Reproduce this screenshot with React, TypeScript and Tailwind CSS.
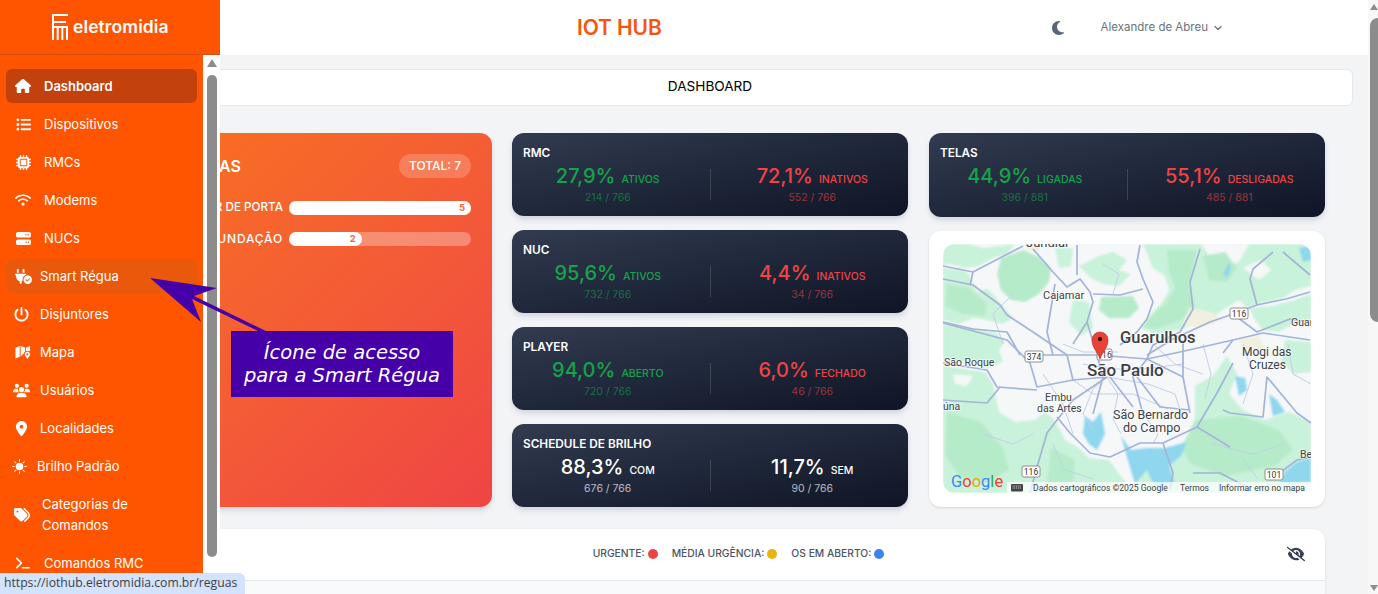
import { FaHouse, FaListUl, FaMicrochip, FaWifi, FaServer, FaPowerOff, FaUsers, FaLocationDot, FaTags, FaTerminal, FaMoon, FaEyeSlash, FaPlugCircleCheck } from 'react-icons/fa6';
import { BsSunFill } from 'react-icons/bs';
import { ChevronDown } from 'lucide-react';

function MapIcon({ size }: { size: number; color?: string }) {
  return (
    <svg width={size} height={size} viewBox="0 0 17 16">
      <path d="M0.5 3.5 L5 1.5 V13 L0.5 15Z M6 1.5 L10.5 3.2 V8 L6 13Z M11.5 3.2 L16 1.5 V7 L11.5 7Z" fill="#fff" />
      <path d="M13 16 C11.5 13.5 10 12.5 10 10.5 A3.2 3.2 0 0 1 16.4 10.5 C16.4 12.5 14.6 13.5 13.2 16Z" fill="#fff" stroke="#ff5500" strokeWidth="1" />
      <circle cx="13.2" cy="10.5" r="1.1" fill="#ff5500" />
    </svg>
  );
}

const nav = [
  { Icon: FaHouse, label: 'Dashboard', size: 16, box: 'w-[34px]', text: 'ml-[4px] font-semibold', row: 'h-[34px] bg-[#c2410c]' },
  { Icon: FaListUl, label: 'Dispositivos', size: 15, box: 'w-[34px]', text: 'ml-[4px]', row: 'h-[34px]' },
  { Icon: FaMicrochip, label: 'RMCs', size: 15, box: 'w-[34px]', text: 'ml-[4px]', row: 'h-[34px]' },
  { Icon: FaWifi, label: 'Modems', size: 16, box: 'w-[34px]', text: 'ml-[4px]', row: 'h-[34px]' },
  { Icon: FaServer, label: 'NUCs', size: 15, box: 'w-[34px]', text: 'ml-[4px]', row: 'h-[34px]' },
  { Icon: FaPlugCircleCheck, label: 'Smart Régua', size: 17, box: 'w-[34px]', text: '', row: 'h-[34px] bg-[#ea580c]' },
  { Icon: FaPowerOff, label: 'Disjuntores', size: 15, box: 'w-[30px]', text: 'ml-[4px]', row: 'h-[34px]' },
  { Icon: MapIcon, label: 'Mapa', size: 16, box: 'w-[34px]', text: '', row: 'h-[34px]' },
  { Icon: FaUsers, label: 'Usuários', size: 17, box: 'w-[30px]', text: 'ml-[4px]', row: 'h-[34px]' },
  { Icon: FaLocationDot, label: 'Localidades', size: 15, box: 'w-[30px]', text: 'ml-[4px]', row: 'h-[34px]' },
  { Icon: BsSunFill, label: 'Brilho Padrão', size: 15, box: 'w-[26px]', text: 'ml-[5px]', row: 'h-[34px]' },
  { Icon: FaTags, label: 'Categorias de Comandos', size: 16, box: 'w-[32px]', text: 'ml-[4px] w-[110px] leading-[21px]', row: 'h-[55px]' },
  { Icon: FaTerminal, label: 'Comandos RMC', size: 14, box: 'w-[34px]', text: 'ml-[4px]', row: 'h-[34px]' },
];

const cards = [
  { title: 'RMC', a: ['27,9%', 'ATIVOS', '214 / 766'], b: ['72,1%', 'INATIVOS', '552 / 766'] },
  { title: 'NUC', a: ['95,6%', 'ATIVOS', '732 / 766'], b: ['4,4%', 'INATIVOS', '34 / 766'] },
  { title: 'PLAYER', a: ['94,0%', 'ABERTO', '720 / 766'], b: ['6,0%', 'FECHADO', '46 / 766'] },
];

function Half({ v, tone }: { v: string[]; tone: 'green' | 'red' | 'white' }) {
  const main = tone === 'green' ? 'text-[#16a34a]' : tone === 'red' ? 'text-[#ef4444]' : 'text-white';
  const sub = tone === 'green' ? 'text-[#16a34a]/60' : tone === 'red' ? 'text-[#ef4444]/60' : 'text-white/70';
  return (
    <div className="flex-1 flex flex-col items-center">
      <div className={`flex items-baseline h-[24px] ${main}`}>
        <span className="text-[20px] leading-[24px] font-medium">{v[0]}</span>
        <span className="ml-[6px] text-[10.5px] font-medium">{v[1]}</span>
      </div>
      <div className={`mt-[3px] text-[10.5px] leading-[14px] ${sub}`}>{v[2]}</div>
    </div>
  );
}

function StatCard({ title, a, b, aTone = 'green', bTone = 'red', grow = true }: { title: string; a: string[]; b: string[]; aTone?: 'green' | 'red' | 'white'; bTone?: 'green' | 'red' | 'white'; grow?: boolean }) {
  return (
    <div className={`${grow ? 'flex-1' : 'h-[84px]'} rounded-xl bg-gradient-to-br from-[#323b50] to-[#0f1526] shadow-md shadow-gray-300 pt-[12px]`}>
      <div className="ml-[11px] text-[11.8px] leading-[16px] font-semibold text-white">{title}</div>
      <div className="flex items-center mx-[-6px] mt-[3px]">
        <Half v={a} tone={aTone} />
        <div className="w-px h-[31px] bg-white/15" />
        <Half v={b} tone={bTone} />
      </div>
    </div>
  );
}

const greenLight = [
  '0,0 26,0 40,4 72,0 64,10 50,14 36,22 22,24 6,20 0,22',
  '0,24 20,26 34,36 50,50 58,60 70,74 60,80 44,76 30,74 16,80 0,76',
  '0,80 24,84 52,88 62,98 56,106 60,118 44,124 28,116 10,120 0,114',
  '200,0 258,0 268,14 280,22 296,18 306,0 368,0 368,42 352,46 340,54 322,58 304,64 296,56 286,62 268,74 254,78 236,86 212,90 198,84 206,72 218,60 226,46 222,32 210,24',
  '306,64 330,62 352,56 368,50 368,78 350,80 336,88 320,86 312,76',
  '342,96 368,98 368,128 350,130 338,116',
  '0,122 42,128 50,140 56,168 72,178 92,176 102,168 112,176 122,196 136,204 146,214 166,216 176,230 192,249 0,249',
  '252,142 270,132 284,112 294,130 286,150 300,166 322,176 346,168 368,178 368,249 236,249 228,232 224,208 244,196 252,176',
  '200,222 226,212 236,249 190,249',
  '130,56 146,58 150,84 138,92 126,78',
  '112,4 130,4 128,22 116,24',
  '136,22 156,12 170,8 184,16 176,26 188,30 176,42 160,40 148,34',
  '270,148 280,156 272,170 262,160',
];
const greenDark = [
  '58,14 80,6 98,14 108,24 106,38 96,50 82,58 68,56 58,46 54,30',
  '224,6 254,6 250,24 246,40 252,62 238,76 216,84 200,84 208,72 222,60 232,44 226,28',
  '158,53 190,52 196,64 186,74 166,74 156,66',
  '260,12 282,8 294,24 284,38 266,36',
  '4,40 26,44 44,60 42,72 20,70 2,62',
  '4,168 38,178 60,204 66,226 44,238 16,232 2,210',
  '252,176 298,172 336,186 350,206 332,222 282,232 248,220 238,204',
  '108,204 132,216 130,238 104,240',
];
const pockets = [
  '26,32 42,30 46,44 34,48',
  '56,148 80,142 92,154 88,172 70,174 58,164',
  '10,130 30,132 24,142 12,140',
  '300,24 318,16 328,26 316,36',
  '76,60 88,62 90,76 78,72',
];
const beige = ['246,64 268,68 280,76 256,84 240,80', '296,94 316,92 322,108 302,112', '82,0 100,0 94,8 84,6'];
const water = [
  '142,172 150,178 158,168 162,190 154,206 146,200 140,190',
  '178,192 188,206 204,204 222,204 244,198 238,212 226,222 232,240 212,244 204,226 192,240 186,220',
  '292,132 302,134 304,146 296,152',
  '326,150 334,156 342,168 330,172',
  '342,228 354,218 368,214 368,238 336,240',
  '356,4 368,2 368,16 360,18',
  '280,30 286,18 288,24 284,34',
];
const roads = [
  '0,22 30,28 55,15 80,2', '0,35 30,41 57,61 64,71 90,88 124,111', '30,28 27,41',
  '90,5 110,28 124,43 137,35 147,48 150,58 144,78 150,98', '134,1 134,31', '197,1 194,18 200,35 210,58 204,75 194,88 177,101',
  '150,50 177,51 200,45', '257,5 247,38 250,65 237,88 210,101 204,115', '367,48 343,55 314,61 290,70 267,78 230,95 204,111',
  '330,8 310,25 307,35 314,61', '367,31 340,8', '290,70 314,88 347,75 367,78', '0,78 30,85 64,88 77,111',
  '97,111 154,111 204,115 237,108', '0,79 64,96 87,119 94,143 130,136 164,133', '0,119 44,126 54,143 94,146', '0,156 44,159 57,143',
  '164,133 130,156 114,176 104,189 94,223 87,249', '114,173 127,189 147,209 167,213 197,199 220,199 254,183 274,149 290,119',
  '167,133 190,163', '194,133 217,163 247,166', '240,96 240,133 247,169', '280,109 290,96 320,89 367,96',
  '280,166 287,169 320,173 324,133 354,169 368,179', '220,199 230,229 227,246', '254,183 287,203', '250,229 277,229 304,243',
  '327,236 354,216 368,213', '154,111 160,133 150,170', '204,115 190,133 200,170', '124,111 130,136', '237,108 290,96',
  '204,115 240,133', '112,40 104,88 110,111', '144,78 130,100',
];
const thin = [
  '164,133 150,145 140,170 150,185', '164,133 175,150 170,175 178,190', '164,133 205,140 232,150 240,175', '130,136 150,150 190,150 225,165',
  '140,120 170,125 200,125 240,120', '120,100 140,108 175,108', '210,100 232,120 260,130', '260,100 268,130 262,155',
  '100,130 120,160 130,190', '200,170 215,190 210,200', '60,100 50,70 70,50', '300,100 310,130 300,160', '160,20 176,30 170,50',
  '345,100 350,130 368,140', '40,190 70,200 90,190', '270,200 310,210 340,200', '300,215 315,235', '110,200 120,225 150,235',
];
const shields = [
  { x: 287, y: 64, w: 18, t: '116' }, { x: 82, y: 107, w: 18, t: '374' }, { x: 154, y: 105, w: 15, t: '116' },
  { x: 79, y: 222, w: 18, t: '116' }, { x: 322, y: 225, w: 18, t: '101' },
];
const labels: [string, number, number, number, number][] = [
  ['Jundiaí', 83, 3, 13, 400], ['Cajamar', 100, 55, 11, 400], ['Guarulhos', 177, 99, 16.5, 500], ['Guar', 348, 82, 10.5, 400],
  ['Mogi das', 299, 112, 12, 400], ['Cruzes', 306, 125, 12, 400], ['São Roque', 1, 122, 10.5, 400], ['São Paulo', 144, 132, 17, 500],
  ['Embu', 102, 157, 10.5, 400], ['das Artes', 94, 168, 10.5, 400], ['úna', 0, 166, 10.5, 400], ['São Bernardo', 170, 175, 12.5, 400],
  ['do Campo', 180, 188, 12.5, 400], ['Be', 357, 214, 10.5, 400],
];

function MapArt() {
  return (
    <svg viewBox="0 0 368 249" className="w-full h-full block">
      <defs>
        <filter id="soft"><feGaussianBlur stdDeviation="0.9" /></filter>
        <filter id="softer"><feGaussianBlur stdDeviation="0.45" /></filter>
      </defs>
      <rect width="368" height="249" fill="#f6f7f9" />
      <g filter="url(#soft)">
        {greenLight.map((p, i) => <polygon key={i} points={p} fill="#c9f2da" />)}
        {greenDark.map((p, i) => <polygon key={i} points={p} fill="#b6ebca" />)}
        {pockets.map((p, i) => <polygon key={i} points={p} fill="#f4f8f6" />)}
        {beige.map((p, i) => <polygon key={i} points={p} fill="#f1efdf" />)}
        {water.map((p, i) => <polygon key={i} points={p} fill="#8fd7ee" />)}
      </g>
      <g filter="url(#softer)" fill="none" strokeLinejoin="round">
        <g stroke="#c4cfe6" strokeWidth="1">
          {thin.map((p, i) => <polyline key={i} points={p} />)}
        </g>
        <g stroke="#a3b4d8" strokeWidth="1.7">
          {roads.map((p, i) => <polyline key={i} points={p} />)}
        </g>
      </g>
      {shields.map((s) => (
        <g key={s.x}>
          <rect x={s.x} y={s.y} width={s.w} height={11} rx={2} fill="#fff" stroke="#777" strokeWidth="0.8" />
          <text x={s.x + s.w / 2} y={s.y + 8.5} textAnchor="middle" fontSize="8.5" fill="#333" className="font-['Roboto']">{s.t}</text>
        </g>
      ))}
      {labels.map(([t, x, y, s, w]) => (
        <text key={t} x={x} y={y} fontSize={s} fontWeight={w} fill="#3c4043" stroke="#fff" strokeWidth="1.4" strokeOpacity="0.8" className="font-['Roboto'] [paint-order:stroke]">{t}</text>
      ))}
      <path d="M157 115 C155 108 149 104 149 96 A8 8 0 0 1 165 96 C165 104 159 108 157 115Z" fill="#ea4335" stroke="#b3261e" strokeWidth="0.6" />
      <circle cx="157" cy="95" r="2.2" fill="#3b0b08" />
      <text x="8" y="243" fontSize="16.5" className="font-['Roboto']" fontWeight="400">
        <tspan fill="#4285f4">G</tspan><tspan fill="#ea4335">o</tspan><tspan fill="#e8a800">o</tspan><tspan fill="#4285f4">g</tspan><tspan fill="#34a853">l</tspan><tspan fill="#ea4335">e</tspan>
      </text>
      <rect x="64" y="238" width="304" height="11" fill="#fff" fillOpacity="0.72" />
      <rect x="68" y="240" width="12" height="7.5" rx="1" fill="#444" />
      <path d="M69.5 242h9M69.5 244h9" stroke="#fff" strokeWidth="0.8" strokeDasharray="1 0.8" />
      <g fontSize="8.6" fill="#3c4043" className="font-['Roboto']">
        <text x="90" y="247">Dados cartográficos ©2025 Google</text>
        <text x="237" y="247">Termos</text>
        <text x="276" y="247">Informar erro no mapa</text>
      </g>
    </svg>
  );
}

export default function App() {
  return (
    <div className="relative w-[1378px] h-[594px] overflow-hidden flex bg-[#f3f4f6] font-['Inter',sans-serif]">
      <aside className="w-[220px] shrink-0 flex flex-col h-full">
        <div className="h-[55px] bg-[#ff5500] border-b border-[#d94f0f] flex items-center pl-[52px] shrink-0">
          <svg width="16" height="26" viewBox="0 0 16 26" fill="none" stroke="#fff" strokeWidth="2" className="mt-[-1px]">
            <path d="M1 26V1H16M1 8H14M1 13H15V26M5.7 13V26M10.3 13V26" />
          </svg>
          <span className="ml-[5px] text-[17.5px] font-semibold tracking-[0.1px] text-white">eletromidia</span>
        </div>
        <div className="flex-1 flex min-h-0">
          <nav className="w-[203px] bg-[#ff5500] pt-[14px] flex flex-col gap-[4px] overflow-hidden">
            {nav.map(({ Icon, label, size, box, text, row }) => (
              <div key={label} className={`mx-[6px] shrink-0 rounded-md flex items-center text-white text-[13px] ${row}`}>
                <div className={`${box} flex justify-center shrink-0`}><Icon size={size} color="#fff" /></div>
                <span className={`pt-px ${text}`}>{label}</span>
              </div>
            ))}
          </nav>
          <div className="w-[17px] bg-white pl-[4px] pt-[4px] flex flex-col">
            <svg width="10" height="8" viewBox="0 0 10 8"><path d="M5 0 L10 8 H0Z" fill="#8c8c8c" /></svg>
            <div className="mt-[8px] w-[10px] h-[482px] rounded-full bg-[#8c8c8c]" />
          </div>
        </div>
      </aside>

      <main className="flex-1 min-w-0 overflow-hidden flex flex-col">
        <header className="h-[55px] shrink-0 bg-white flex items-center pl-[357px] pr-[144px]">
          <span className="text-[21px] font-semibold text-[#f4560f] tracking-[-0.1px]">IOT HUB</span>
          <FaMoon size={16} color="#5b6478" className="ml-auto" />
          <span className="ml-[35px] text-[11.5px] text-[#6b7280]">Alexandre de Abreu</span>
          <ChevronDown size={12} strokeWidth={2.5} color="#6b7280" className="ml-[4px]" />
        </header>

        <div className="mt-[14px] ml-[-153px] mr-[15px] h-[37px] shrink-0 bg-white border border-[#e5e7eb] rounded-md flex items-center justify-center pb-[2px] text-[13.6px] font-normal text-black">DASHBOARD</div>

        <div className="mt-[27px] ml-[-124px] h-[374px] shrink-0 grid grid-cols-[396px_396px_397px] gap-x-[20px]">
          <div className="rounded-xl bg-gradient-to-br from-[#f97316] to-[#ef4444] shadow-md shadow-gray-300 pr-[21px] pt-[21px] text-white">
            <div className="flex items-center justify-between h-[24px]">
              <span className="w-[145px] text-right text-[16px] font-semibold">ALERTAS</span>
              <span className="h-[24px] px-[10px] rounded-full bg-white/20 flex items-center text-[12px] font-medium">TOTAL: 7</span>
            </div>
            <div className="mt-[23px] flex items-center h-[14px]">
              <span className="w-[187px] whitespace-nowrap text-right text-[11.7px] font-medium">SENSOR DE PORTA</span>
              <div className="ml-[6px] flex-1 h-[14px] rounded-full bg-white/30">
                <div className="h-full w-full rounded-full bg-white flex items-center justify-end pr-[6px] text-[9.5px] font-bold text-[#f4693a]">5</div>
              </div>
            </div>
            <div className="mt-[17px] flex items-center h-[14px]">
              <span className="w-[187px] whitespace-nowrap text-right text-[12px] tracking-[0.8px] font-medium">INUNDAÇÃO</span>
              <div className="ml-[6px] flex-1 h-[14px] rounded-full bg-white/30">
                <div className="h-full w-[40%] rounded-full bg-white flex items-center justify-end pr-[6px] text-[9.5px] font-bold text-[#f4693a]">2</div>
              </div>
            </div>
          </div>

          <div className="flex flex-col gap-[13.4px]">
            {cards.map((c) => <StatCard key={c.title} {...c} />)}
            <StatCard title="SCHEDULE DE BRILHO" a={['88,3%', 'COM', '676 / 766']} b={['11,7%', 'SEM', '90 / 766']} aTone="white" bTone="white" />
          </div>

          <div className="pl-[1px] flex flex-col gap-[14px]">
            <StatCard grow={false} title="TELAS" a={['44,9%', 'LIGADAS', '396 / 881']} b={['55,1%', 'DESLIGADAS', '485 / 881']} />
            <div className="flex-1 min-h-0 rounded-xl bg-white shadow-sm px-[14px] pt-[13px] pb-[14px]">
              <div className="h-full rounded-xl overflow-hidden"><MapArt /></div>
            </div>
          </div>
        </div>

        <section className="mt-[22px] ml-[-124px] mr-[43px] flex-1 min-h-0 shrink-0 rounded-t-xl bg-white shadow-sm">
          <div className="h-[52px] border-b border-[#e5e7eb] flex items-center pb-[2px] pl-[94px] pr-[20px]">
            <div className="flex-1 flex justify-center items-center text-[10.3px] font-medium text-[#4b5563]">
              <span>URGENTE:</span><span className="ml-[3px] w-[10px] h-[10px] rounded-full bg-[#ef4444]" />
              <span className="ml-[14px]">MÉDIA URGÊNCIA:</span><span className="ml-[3px] w-[10px] h-[10px] rounded-full bg-[#eab308]" />
              <span className="ml-[14px]">OS EM ABERTO:</span><span className="ml-[3px] w-[10px] h-[10px] rounded-full bg-[#3b82f6]" />
            </div>
            <FaEyeSlash size={18} color="#374151" />
          </div>
          <div className="h-full bg-[#f9fafb]" />
        </section>
      </main>

      <div className="w-[10px] shrink-0 bg-[#f7f7f7] flex flex-col items-end relative h-full">
        <svg width="8" height="6" viewBox="0 0 8 6" className="mt-[4px]"><path d="M4 0 L8 6 H0Z" fill="#8c8c8c" /></svg>
        <div className="mt-[8px] w-[8px] h-[304px] rounded-l-full bg-[#8c8c8c]" />
        <svg width="8" height="6" viewBox="0 0 8 6" className="mt-auto mb-[3px]"><path d="M4 6 L8 0 H0Z" fill="#8c8c8c" /></svg>
      </div>

      {/* Annotation overlay */}
      <svg className="absolute left-0 top-0 pointer-events-none" width="300" height="340" viewBox="0 0 300 340">
        <path d="M150 278 L217 288 L194 296 L268 332 L262 333 L192 299 L201 322 Z" fill="#4500a8" />
      </svg>
      <div className="absolute left-[231px] top-[331px] w-[222px] h-[66px] bg-[#4500a8] flex flex-col items-center justify-center text-white italic font-['DejaVu_Sans',sans-serif] text-[19.5px] leading-[23.5px]">
        <span>Ícone de acesso</span>
        <span>para a Smart Régua</span>
      </div>

      {/* Browser status bubble */}
      <div className="absolute left-0 bottom-0 w-[245px] h-[21px] rounded-tr-md bg-[#d3e3fd] flex items-center pl-[4px] text-[12.2px] text-[#3c4043] font-['Open_Sans',sans-serif] whitespace-nowrap">https://iothub.eletromidia.com.br/reguas</div>
    </div>
  );
}
